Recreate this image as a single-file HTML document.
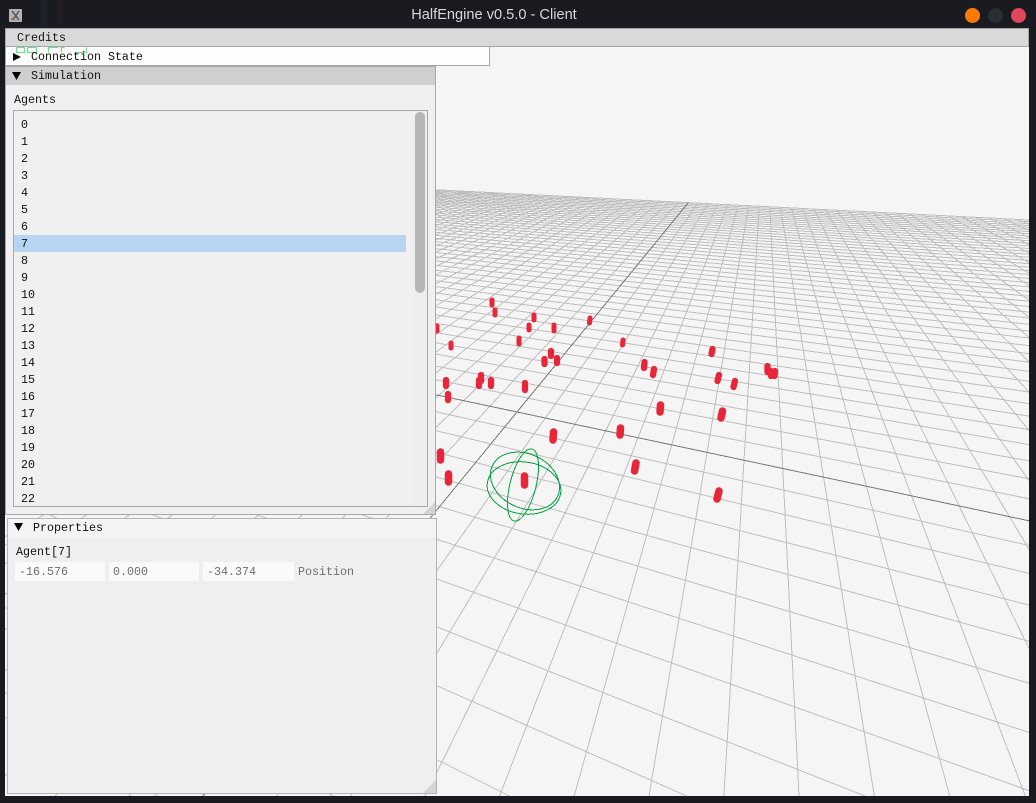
<!DOCTYPE html>
<html><head><meta charset="utf-8"><title>HalfEngine v0.5.0 - Client</title>
<style>
html,body{margin:0;padding:0;width:1036px;height:803px;overflow:hidden;background:#191b20}
body{position:relative;font-family:"Liberation Mono",monospace;font-size:11.67px;color:#111}
div{position:absolute;box-sizing:border-box}
.t{white-space:pre;line-height:14px;height:14px}
.row{left:21px;white-space:pre;line-height:14px;height:14px}
svg{position:absolute;left:0;top:0}
</style></head><body>
<div style="left:0;top:0;width:1036px;height:28px;background:#191b20"></div>
<div style="left:40px;top:0;width:7px;height:28px;background:#1c2029"></div>
<div style="left:57px;top:0;width:6px;height:28px;background:#211c22"></div>
<div class="t" style="left:0;top:6px;width:988px;height:18px;line-height:18px;text-align:center;font-family:'Liberation Sans',sans-serif;font-size:14.6px;color:#d6d7d9">HalfEngine v0.5.0 - Client</div>
<div style="left:9px;top:9px;width:13px;height:13px;background:#b4b4b4;border-radius:1px"></div>
<svg width="1036" height="30"><path d="M12 11l7 9M19 11l-6 9" stroke="#55585c" stroke-width="1.5" fill="none"/><path d="M11 20l3-3" stroke="#c0705f" stroke-width="1.5"/></svg>
<div style="left:965px;top:8px;width:15px;height:15px;border-radius:50%;background:#ff7b00"></div>
<div style="left:988px;top:8px;width:15px;height:15px;border-radius:50%;background:#2a2d32"></div>
<div style="left:1011px;top:8px;width:15px;height:15px;border-radius:50%;background:#e0475a"></div>

<div style="left:5px;top:28px;width:1024px;height:768px;background:#f5f5f5"></div>
<svg id="v" width="1036" height="803" xmlns="http://www.w3.org/2000/svg">
<defs><clipPath id="c"><rect x="5" y="47" width="1024" height="749"/></clipPath></defs>
<g clip-path="url(#c)">
<g id="g" stroke="#bebebe" stroke-width="1" shape-rendering="crispEdges" fill="none"></g>
<g id="k" stroke="#787878" stroke-width="1" shape-rendering="crispEdges" fill="none"></g>
<g stroke="#e9253a" stroke-linecap="round" fill="none">
<g stroke-width="5">
<line x1="492" y1="300" x2="492" y2="305"/><line x1="495" y1="310" x2="495" y2="315"/>
<line x1="534" y1="315" x2="534" y2="320"/><line x1="529" y1="325" x2="529" y2="330"/>
<line x1="554" y1="325" x2="554" y2="331"/><line x1="519" y1="338" x2="519" y2="344"/>
<line x1="590" y1="318" x2="589.5" y2="323"/><line x1="623" y1="340" x2="622.5" y2="345"/>
<line x1="437" y1="326" x2="437" y2="331"/><line x1="451" y1="343" x2="451" y2="348"/>
</g>
<g stroke-width="6.3">
<line x1="551" y1="351" x2="551" y2="356"/><line x1="544.5" y1="359" x2="544.5" y2="364"/>
<line x1="557" y1="358" x2="557" y2="363"/><line x1="712.5" y1="349" x2="711.5" y2="354"/>
<line x1="644.5" y1="362" x2="644" y2="368"/><line x1="654" y1="369" x2="653" y2="375"/>
<line x1="719" y1="375" x2="717.5" y2="381"/><line x1="735" y1="381" x2="733.5" y2="387"/>
<line x1="446" y1="380" x2="446" y2="386"/><line x1="481" y1="375" x2="481" y2="381"/>
<line x1="479" y1="380" x2="479" y2="386"/><line x1="491" y1="380" x2="491" y2="386"/>
<line x1="525" y1="383" x2="525" y2="390"/><line x1="448" y1="394" x2="448" y2="400"/>
<line x1="767.5" y1="366" x2="767.5" y2="372"/><line x1="771" y1="371" x2="771" y2="376"/><line x1="775" y1="371" x2="774.5" y2="376"/>
</g>
<g stroke-width="7.5">
<line x1="660.5" y1="405" x2="660" y2="412"/><line x1="722.5" y1="411" x2="721" y2="418"/>
<line x1="620.5" y1="428" x2="620" y2="435"/><line x1="553.5" y1="432" x2="553" y2="440"/>
<line x1="440.5" y1="452" x2="440.5" y2="460"/><line x1="448.5" y1="474" x2="448.5" y2="482"/>
<line x1="524.5" y1="476" x2="524.5" y2="485"/><line x1="636" y1="463" x2="634.5" y2="471"/>
<line x1="719" y1="491" x2="717" y2="499"/>
</g>
</g>
<g stroke="#00a23a" stroke-width="1" shape-rendering="crispEdges" fill="none">
<ellipse cx="524" cy="488" rx="37" ry="26" transform="rotate(8 524 488)"/>
<ellipse cx="525" cy="481" rx="36" ry="27" transform="rotate(25 525 481)"/>
<ellipse cx="523" cy="485" rx="13" ry="37" transform="rotate(14 523 485)"/>
</g>
</g>
</svg>
<script>
(function(){
var A=[-834,125],B=[765,109],O=[517,412],a=-.02055,b=-.0476,N=47,e=.05;
function P(u,v){var w=1+a*u+b*v;return [(a*u*A[0]+b*v*B[0]+O[0])/w,(a*u*A[1]+b*v*B[1]+O[1])/w];}
function clip(p,q){var t0=0,t1=1,dx=q[0]-p[0],dy=q[1]-p[1];
var P1=[-dx,dx,-dy,dy],Q=[p[0]-5,1029-p[0],p[1]-47,796-p[1]];
for(var i=0;i<4;i++){if(P1[i]===0){if(Q[i]<0)return '';continue;}var r=Q[i]/P1[i];
if(P1[i]<0){if(r>t1)return '';if(r>t0)t0=r;}else{if(r<t0)return '';if(r<t1)t1=r;}}
return 'M'+(p[0]+t0*dx).toFixed(1)+' '+(p[1]+t0*dy).toFixed(1)+'L'+(p[0]+t1*dx).toFixed(1)+' '+(p[1]+t1*dy).toFixed(1);}
function H(u){var m=Math.min(22,(1+a*u-e)/(-b));return m<=-N?'':clip(P(u,-N),P(u,m));}
function V(v){var m=Math.min(N,(1+b*v-e)/(-a));return m<=-N?'':clip(P(-N,v),P(m,v));}
var d='',i;
for(i=-N;i<=22;i++){if(i!==0)d+=V(i);}
for(i=-N;i<=N;i++){if(i!==0)d+=H(i);}
function add(id,dd){var s=document.createElementNS('http://www.w3.org/2000/svg','path');s.setAttribute('d',dd);document.getElementById(id).appendChild(s);}
add('g',d);add('k',H(0)+V(0));
})();
</script>

<!-- menu -->
<div style="left:5px;top:28px;width:1024px;height:19px;background:#d9d9d9;border:1px solid #a6a6a6"></div>
<div class="t" style="left:17px;top:31px">Credits</div>

<!-- connection state -->
<div style="left:5px;top:47px;width:485px;height:19px;background:#fdfdfd;border:1px solid #a8a8a8;border-top:0"></div>
<svg width="100" height="70" style="left:0;top:0"><path d="M16.500 47.500v5h8v-5M16.500 47.500h8M27.500 47.500v5h9v-5M27.500 47.500h9M48.500 52.500v-5h10M61.500 52.500v-5h3M75.500 52.500h11v-5" fill="none" stroke="#7fd49b" stroke-width="1.300"/><path d="M13 53l8 4-8 4z" fill="#000"/></svg>
<div class="t" style="left:31px;top:50px">Connection State</div>

<!-- simulation -->
<div style="left:5px;top:66px;width:431px;height:449px;background:#f0f0f0;border:1px solid #a8a8a8"></div>
<div style="left:6px;top:67px;width:429px;height:18px;background:#cfcfcf"></div>
<svg width="30" height="90" style="left:0;top:0"><path d="M12 72h9l-4.500 8z" fill="#000"/></svg>
<div class="t" style="left:31px;top:69px">Simulation</div>
<div class="t" style="left:14px;top:93px">Agents</div>
<div style="left:13px;top:110px;width:415px;height:397px;background:#f0f0f0;border:1px solid #a8a8a8"></div>
<div style="left:14px;top:235px;width:392px;height:17px;background:#b7d4f2"></div>
<div style="left:413px;top:111px;width:14px;height:395px;background:#eeeeee"></div>
<div style="left:415px;top:112px;width:10px;height:181px;background:#b6b6b6;border-radius:5px"></div>
<div class="row" style="top:118px">0</div>
<div class="row" style="top:135px">1</div>
<div class="row" style="top:152px">2</div>
<div class="row" style="top:169px">3</div>
<div class="row" style="top:186px">4</div>
<div class="row" style="top:203px">5</div>
<div class="row" style="top:220px">6</div>
<div class="row" style="top:237px">7</div>
<div class="row" style="top:254px">8</div>
<div class="row" style="top:271px">9</div>
<div class="row" style="top:288px">10</div>
<div class="row" style="top:305px">11</div>
<div class="row" style="top:322px">12</div>
<div class="row" style="top:339px">13</div>
<div class="row" style="top:356px">14</div>
<div class="row" style="top:373px">15</div>
<div class="row" style="top:390px">16</div>
<div class="row" style="top:407px">17</div>
<div class="row" style="top:424px">18</div>
<div class="row" style="top:441px">19</div>
<div class="row" style="top:458px">20</div>
<div class="row" style="top:475px">21</div>
<div class="row" style="top:492px">22</div>
<svg width="440" height="520" style="left:0;top:0"><path d="M435 502v12h-12z" fill="#d4d4d4"/></svg>

<!-- properties -->
<div style="left:7px;top:518px;width:430px;height:276px;background:#efefef;border:1px solid #b4b4b4"></div>
<div style="left:8px;top:519px;width:428px;height:18px;background:#f4f4f4"></div>
<svg width="30" height="540" style="left:0;top:0"><path d="M14 523h9l-4.500 8z" fill="#000"/></svg>
<div class="t" style="left:33px;top:521px">Properties</div>
<div class="t" style="left:16px;top:545px">Agent[7]</div>
<div style="left:15px;top:562px;width:90px;height:19px;background:#fafafa"></div>
<div style="left:109px;top:562px;width:90px;height:19px;background:#fafafa"></div>
<div style="left:203px;top:562px;width:91px;height:19px;background:#fafafa"></div>
<div class="t" style="left:19px;top:565px;color:#6e6e6e">-16.576</div>
<div class="t" style="left:113px;top:565px;color:#6e6e6e">0.000</div>
<div class="t" style="left:207px;top:565px;color:#6e6e6e">-34.374</div>
<div class="t" style="left:298px;top:565px;color:#6e6e6e">Position</div>
<svg width="440" height="800" style="left:0;top:0"><path d="M436 780v13h-13z" fill="#d6d6d6"/></svg>
</body></html>
